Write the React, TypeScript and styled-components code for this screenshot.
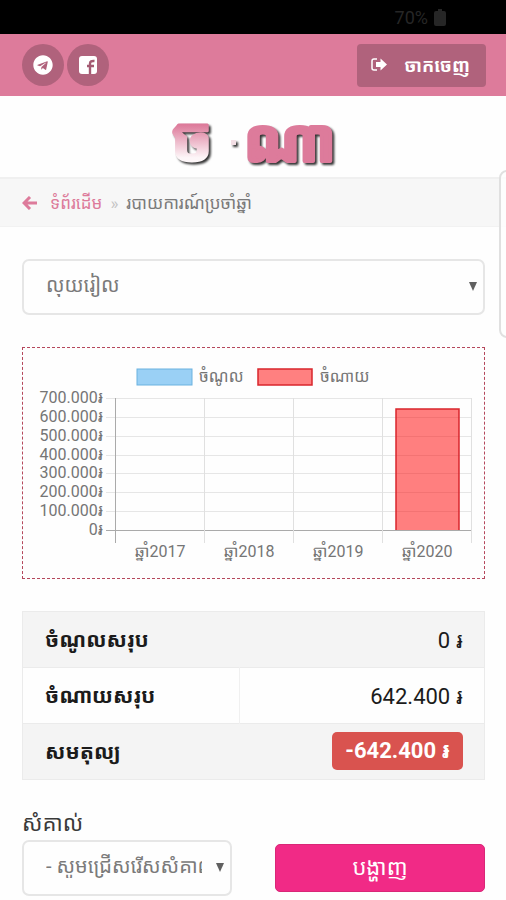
import React, { useState } from "react";
import styled, { createGlobalStyle, css } from "styled-components";
import { FaTelegram } from "react-icons/fa";

const khmer = `Roboto, "Khmer OS Battambang", "Noto Sans Khmer", "Noto Sans", "DejaVu Sans", sans-serif`;

const GlobalStyle = createGlobalStyle`
  *, *::before, *::after { box-sizing: border-box; }
  body { margin: 0; background: #fefefe; color: #222; font-family: ${khmer}; font-size: 16px; }
  button, select { font-family: inherit; }
`;

const Page = styled.div`
  position: relative;
  overflow-x: hidden;
`;

const StatusBar = styled.div`
  display: flex;
  align-items: center;
  justify-content: flex-end;
  gap: 6px;
  height: 34px;
  padding: 0 60px 0 0;
  background: #000;
  color: #262626;
  font-size: 18px;
`;

const Header = styled.header`
  display: flex;
  align-items: center;
  justify-content: space-between;
  height: 62px;
  padding: 0 20px 0 22px;
  background: #dd7b9b;
`;

const Socials = styled.nav`
  display: flex;
  gap: 3px;
`;

const RoundLink = styled.a`
  display: flex;
  align-items: center;
  justify-content: center;
  width: 42px;
  height: 42px;
  border-radius: 50%;
  background: #b0627c;
  color: #fff;
  font-size: 20px;
`;

const LogoutButton = styled.button`
  display: flex;
  align-items: center;
  justify-content: space-between;
  width: 129px;
  height: 43px;
  padding: 0 16px 0 14px;
  border: 0;
  border-radius: 4px;
  background: #b0627c;
  color: #fff;
  font-size: 18px;
  font-weight: 700;
  white-space: nowrap;
`;

const LogoBand = styled.div`
  display: flex;
  justify-content: center;
  align-items: flex-end;
  height: 81px;
`;

const Wordmark = styled.svg`
  display: block;
  width: 180px;
  height: 78px;
  font-family: ${khmer};
  font-weight: 700;
  stroke-linejoin: round;
  filter: drop-shadow(2px 2px 1px #333);
`;

const Crumbs = styled.nav`
  display: flex;
  align-items: center;
  gap: 8px;
  height: 50px;
  padding: 0 22px;
  border-top: 2px solid #f0f0f0;
  border-bottom: 1px solid #f2f2f2;
  background: #f7f7f7;
  color: #7a7a7a;
  font-size: 17px;
  white-space: nowrap;
`;

const HomeLink = styled.a`
  display: flex;
  align-items: center;
  gap: 13px;
  color: #dd7b9b;
  text-decoration: none;
`;

const Separator = styled.span`
  color: #c4c4c4;
`;

const Main = styled.main`
  display: flex;
  flex-direction: column;
  gap: 32px;
  padding: 32px 21px 5px 22px;
`;

const SelectFrame = styled.div`
  position: relative;
`;

const Select = styled.select`
  display: block;
  width: 100%;
  height: 56px;
  padding: 0 28px 4px 22px;
  border: 2px solid #e6e6e6;
  border-radius: 7px;
  background: #fefefe;
  color: #7a7a7a;
  font-size: 20px;
  appearance: none;
`;

const Caret = styled.svg`
  position: absolute;
  right: 8px;
  top: 23px;
  width: 8px;
  height: 9px;
  fill: #606060;
  pointer-events: none;
`;

const ChartBox = styled.section`
  border: 1px dashed #b5475c;
`;

const ChartSvg = styled.svg`
  display: block;
  width: 100%;
  height: auto;
  font-family: ${khmer};
  font-size: 16px;
  fill: #757575;
`;

const Totals = styled.table`
  width: 100%;
  border-collapse: collapse;
  border: 1px solid #ebebeb;
  color: #1b1b1b;
  font-size: 22px;
`;

const TotalRow = styled.tr<{ $shaded?: boolean }>`
  height: 56px;
  border-bottom: 1px solid #ebebeb;
  ${(p) => p.$shaded && css`background: #f4f4f4;`}
`;

const TotalLabel = styled.th<{ $divided?: boolean }>`
  width: 47%;
  padding: 0 0 2px 22px;
  text-align: left;
  font-size: 21px;
  font-weight: 700;
  white-space: nowrap;
  ${(p) => p.$divided && css`border-right: 1px solid #f0f0f0;`}
`;

const TotalValue = styled.td`
  padding: 0 21px 2px 0;
  text-align: right;
  white-space: nowrap;
`;

const Badge = styled.span`
  display: inline-block;
  padding: 0 13px;
  border-radius: 5px;
  background: #d9534f;
  color: #fff;
  font-weight: 700;
  line-height: 38px;
`;

const Filter = styled.form`
  display: grid;
  grid-template-columns: 1fr 1fr;
  column-gap: 43px;
  align-items: center;
`;

const FilterLabel = styled.label`
  grid-column: 1 / -1;
  height: 28px;
  line-height: 24px;
  color: #3a3a3a;
  font-size: 22px;
`;

const ShowButton = styled.button`
  height: 48px;
  border: 1px solid #d92777;
  border-radius: 5px;
  background: #f12a86;
  color: #fff;
  font-size: 22px;
  line-height: 24px;
`;

const EdgePanel = styled.div`
  position: absolute;
  top: 170px;
  right: -14px;
  width: 21px;
  height: 168px;
  border: 2px solid #e0e0e0;
  border-radius: 8px;
  background: rgba(254, 254, 254, 0.8);
`;

const years = [2017, 2018, 2019, 2020];
const ticks = ["700.000", "600.000", "500.000", "400.000", "300.000", "200.000", "100.000", "0"];

function DropDown({ id, label, options }: { id: string; label?: string; options: string[] }) {
  const [value, setValue] = useState(options[0]);
  return (
    <SelectFrame>
      <Select id={id} aria-label={label} value={value} onChange={(e) => setValue(e.target.value)}>
        {options.map((o) => <option key={o}>{o}</option>)}
      </Select>
      <Caret viewBox="0 0 8 9" aria-hidden="true"><path d="M0 0h8L4 9z" /></Caret>
    </SelectFrame>
  );
}

function Logo() {
  return (
    <Wordmark viewBox="0 0 180 78">
      <defs>
        <linearGradient id="fade" x1="0" y1="0" x2="0" y2="1">
          <stop offset="0.3" stopColor="#dd7b9b" />
          <stop offset="0.75" stopColor="#fdf6f8" />
        </linearGradient>
      </defs>
      <text x="8" y="62" fontSize="62" fill="url(#fade)" stroke="url(#fade)" strokeWidth="3">ច</text>
      <rect x="68" y="41" width="5" height="5" fill="#f3dfe5" />
      <text x="81" y="62" fontSize="58" fill="#dd7b9b" stroke="#dd7b9b" strokeWidth="4">ណា</text>
    </Wordmark>
  );
}

function Chart() {
  return (
    <ChartSvg viewBox="0 0 461 230" role="img" aria-label="ចំណូល ចំណាយ">
      <rect x="114" y="21" width="55" height="16" fill="#9ad0f5" stroke="#6bb2df" strokeWidth="1" />
      <text x="176" y="34">ចំណូល</text>
      <rect x="235" y="21" width="54" height="16" fill="#ff8080" stroke="#d9262c" strokeWidth="1.5" />
      <text x="297" y="34">ចំណាយ</text>
      {ticks.map((t, i) => (
        <React.Fragment key={t}>
          <path d={`M83 ${50.5 + Math.round(i * 18.86)}H449`} stroke={i === 7 ? "#aaa" : "#e6e6e6"} />
          <text x="80" y={55 + Math.round(i * 18.86)} textAnchor="end">{t}៛</text>
        </React.Fragment>
      ))}
      {[92.5, 181.5, 270.5, 359.5, 448.5].map((x, i) => (
        <path key={x} d={`M${x} 50V195`} stroke={i === 0 ? "#aaa" : "#e0e0e0"} />
      ))}
      {years.map((y, i) => (
        <text key={y} x={137 + i * 89} y="209" textAnchor="middle">ឆ្នាំ{y}</text>
      ))}
      <path d="M373 182V61H436V182z" fill="#ff0000" fillOpacity="0.5" />
      <path d="M373 182V61H436V182" fill="none" stroke="#d9262c" strokeWidth="1.5" />
    </ChartSvg>
  );
}

export default function App() {
  return (
    <Page>
      <GlobalStyle />
      <StatusBar>
        <span>70%</span>
        <svg width="12" height="17" viewBox="0 0 12 17" fill="currentColor" aria-hidden="true">
          <path d="M4 0h4v2h2q2 0 2 2v11q0 2-2 2H2q-2 0-2-2V4q0-2 2-2h2z" />
        </svg>
      </StatusBar>
      <Header>
        <Socials>
          <RoundLink href="#telegram" aria-label="Telegram"><FaTelegram /></RoundLink>
          <RoundLink href="#facebook" aria-label="Facebook">
            <svg width="18" height="18" viewBox="0 0 18 18" aria-hidden="true">
              <rect width="18" height="18" rx="3" fill="#fff" />
              <path d="M11 18V7.500Q11 4.500 15.500 5M8 10h7" fill="none" stroke="#a45a72" strokeWidth="2.4" />
            </svg>
          </RoundLink>
        </Socials>
        <LogoutButton type="button">
          <svg width="17" height="14" viewBox="0 0 17 14" aria-hidden="true">
            <path d="M6 1H3Q1 1 1 3v7q0 2 2 2h3" fill="none" stroke="#fff" strokeWidth="1.5" />
            <path d="M5 4h4.500V0.500L16 6.500l-6.500 6V9H5z" fill="#fff" />
          </svg>
          <span>ចាកចេញ</span>
        </LogoutButton>
      </Header>
      <LogoBand><Logo /></LogoBand>
      <Crumbs>
        <HomeLink href="#home">
          <svg width="15" height="14" viewBox="0 0 15 14" aria-hidden="true">
            <path d="M8 1L2 7l6 6M2 7h13" fill="none" stroke="currentColor" strokeWidth="3" />
          </svg>
          <span>ទំព័រដើម</span>
        </HomeLink>
        <Separator>»</Separator>
        <span>របាយការណ៍ប្រចាំឆ្នាំ</span>
      </Crumbs>
      <Main>
        <DropDown id="currency" label="លុយ" options={["លុយរៀល"]} />
        <ChartBox><Chart /></ChartBox>
        <Totals>
          <tbody>
            <TotalRow $shaded><TotalLabel scope="row">ចំណូលសរុប</TotalLabel><TotalValue>0 ៛</TotalValue></TotalRow>
            <TotalRow><TotalLabel scope="row" $divided>ចំណាយសរុប</TotalLabel><TotalValue>642.400 ៛</TotalValue></TotalRow>
            <TotalRow $shaded><TotalLabel scope="row">សមតុល្យ</TotalLabel><TotalValue><Badge>-642.400 ៛</Badge></TotalValue></TotalRow>
          </tbody>
        </Totals>
        <Filter onSubmit={(e) => e.preventDefault()}>
          <FilterLabel htmlFor="note">សំគាល់</FilterLabel>
          <DropDown id="note" options={["- សូមជ្រើសរើសសំគាល់ -"]} />
          <ShowButton type="submit">បង្ហាញ</ShowButton>
        </Filter>
      </Main>
      <EdgePanel aria-hidden="true" />
    </Page>
  );
}
